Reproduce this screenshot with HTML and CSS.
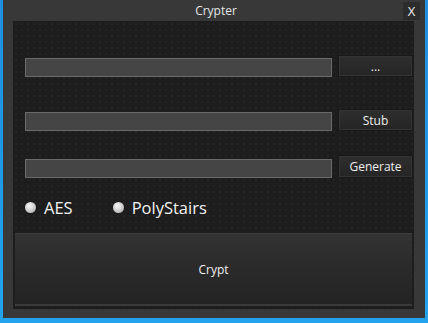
FILE: index.html
```html
<!DOCTYPE html>
<html lang="en">
<head>
<meta charset="UTF-8">
<meta name="viewport" content="width=device-width, initial-scale=1.0">
<title>Crypter</title>
<link rel="stylesheet" href="styles.css">
</head>
<body>
<div class="ventana">
    <div class="barra-titulo">
        <span></span>
        <span class="titulo">Crypter</span>
        <button type="button" class="cerrar">X</button>
    </div>
    <div class="panel">
        <div class="fila fila-1">
            <input type="text" class="campo">
            <button type="button" class="boton">...</button>
        </div>
        <div class="fila fila-2">
            <input type="text" class="campo">
            <button type="button" class="boton">Stub</button>
        </div>
        <div class="fila fila-3">
            <input type="text" class="campo">
            <button type="button" class="boton">Generate</button>
        </div>
        <div class="opciones">
            <label class="opcion"><span class="radio"></span>AES</label>
            <label class="opcion"><span class="radio"></span>PolyStairs</label>
        </div>
        <button type="button" class="crypt">Crypt</button>
    </div>
</div>
</body>
</html>
```

FILE: styles.css
```css
body {
    margin: 0;
    height: 323px;
    overflow: hidden;
    font-family: 'Open Sans', sans-serif;
    background: linear-gradient(180deg, #1f8fe0 0%, #23a3ee 100%);
}
.ventana {
    margin-left: 3px;
    width: 422px;
    height: 318px;
    background: #383838;
    display: flex;
    flex-direction: column;
}
.barra-titulo {
    height: 21px;
    display: grid;
    grid-template-columns: 1fr auto 1fr;
    align-items: center;
    color: #e6e6e6;
    font-size: 12px;
}
.titulo {
    padding-left: 4px;
}
.cerrar {
    justify-self: end;
    margin-right: 5px;
    width: 17px;
    height: 18px;
    padding: 0;
    border: none;
    background: #2c2c2c;
    color: #eee;
    font-family: 'Open Sans', sans-serif;
    font-size: 13px;
}
.panel {
    margin: 0 11px 9px 10px;
    flex: 1;
    background-color: #1d1d1d;
    background-image: radial-gradient(circle, #242424 1px, transparent 1.3px);
    background-size: 6px 6px;
    display: flex;
    flex-direction: column;
    padding: 34px 1px 3px 12px;
    box-sizing: border-box;
}
.fila {
    display: flex;
    align-items: flex-end;
    gap: 6px;
}
.fila-2 {
    margin-top: 32px;
}
.fila-3 {
    margin-top: 24px;
}
.campo {
    width: 307px;
    height: 19px;
    box-sizing: border-box;
    background: #454545;
    border: 1px solid #6a6a6a;
    margin: 0;
}
.boton {
    width: 75px;
    height: 22px;
    padding: 0;
    background: linear-gradient(180deg, #2e2e2e, #252525);
    border: 1px solid #191919;
    box-shadow: inset 0 0 0 1px #333;
    color: #eee;
    font-family: 'Open Sans', sans-serif;
    font-size: 12px;
}
.fila-3 .boton {
    height: 23px;
}
.opciones {
    display: flex;
    gap: 40px;
    margin-top: 19px;
    height: 20px;
    align-items: center;
}
.opcion {
    display: flex;
    align-items: center;
    gap: 8px;
    color: #f2f2f2;
    font-size: 16.5px;
}
.radio {
    width: 11px;
    height: 11px;
    border-radius: 50%;
    background: radial-gradient(circle at 40% 35%, #fafafa, #bdbdbd 70%, #8a8a8a);
}
.crypt {
    margin: auto 1px 0 -10px;
    height: 73px;
    background: linear-gradient(180deg, #333 0%, #2b2b2b 45%, #242424 100%);
    border: none;
    border-top: 1px solid #3c3c3c;
    border-bottom: 2px solid #3a3a3a;
    color: #f0f0f0;
    font-family: 'Open Sans', sans-serif;
    font-size: 12px;
}
```
